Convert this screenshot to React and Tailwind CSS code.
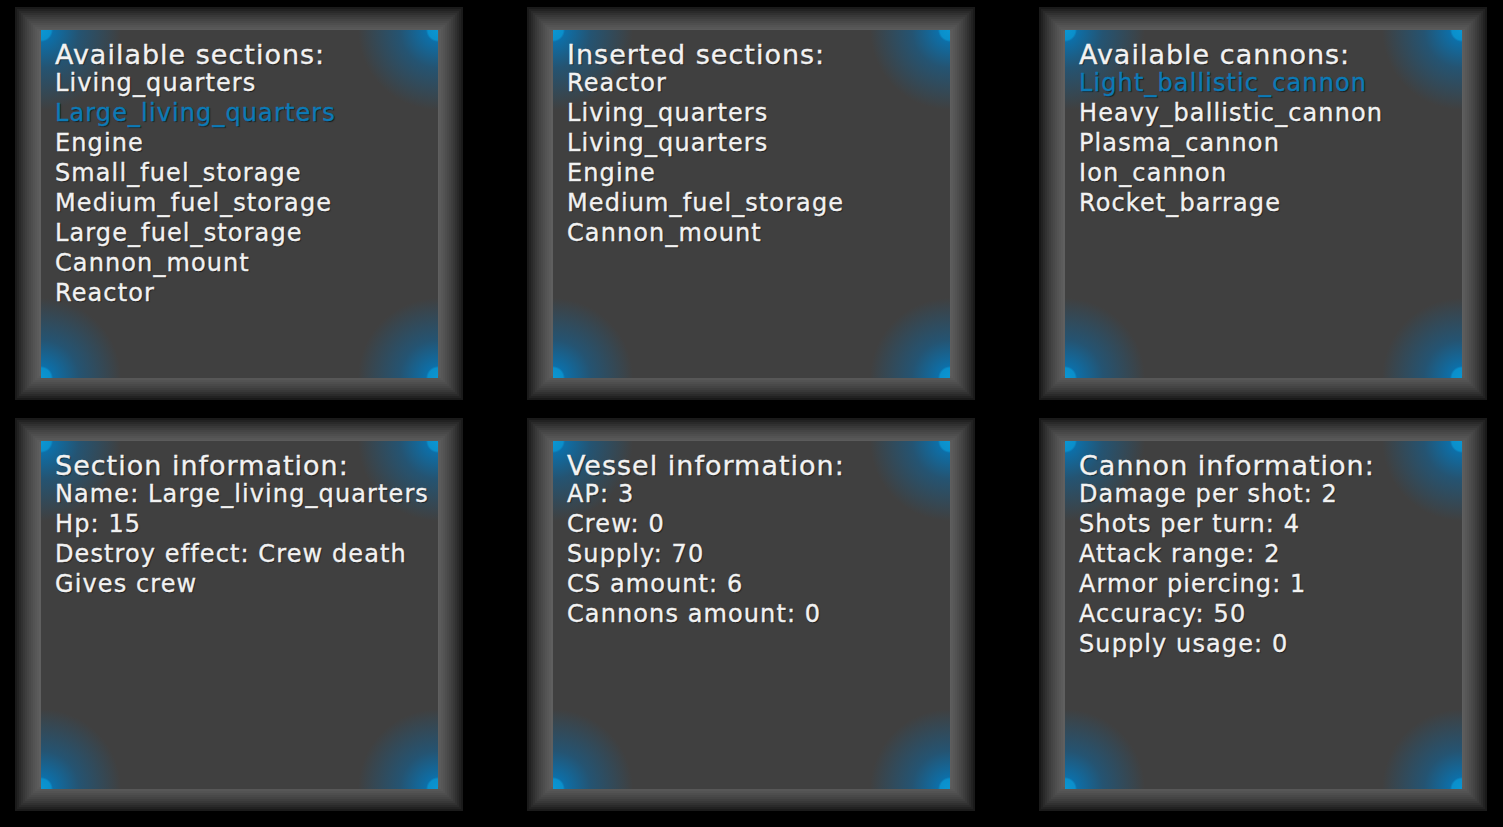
import React from "react";

const frame =
  "shadow-[inset_0_0_0_2px_#1a1a1a,inset_0_0_0_4px_#222222,inset_0_0_0_6px_#2a2a2a,inset_0_0_0_8px_#313131,inset_0_0_0_10px_#383838,inset_0_0_0_12px_#3e3e3e,inset_0_0_0_14px_#444444,inset_0_0_0_16px_#494949,inset_0_0_0_18px_#4e4e4e,inset_0_0_0_20px_#535353,inset_0_0_0_22px_#575757,inset_0_0_0_24px_#5b5b5b,inset_0_0_0_26px_#5f5f5f]";

const glow =
  "bg-[radial-gradient(circle_at_0_0,#0b96d2_0,#0a8fcb_10px,#0d6fa8_12px,rgba(14,100,155,0.55)_38px,rgba(64,64,64,0)_80px),radial-gradient(circle_at_100%_0,#0b96d2_0,#0a8fcb_10px,#0d6fa8_12px,rgba(14,100,155,0.55)_38px,rgba(64,64,64,0)_80px),radial-gradient(circle_at_0_100%,#0b96d2_0,#0a8fcb_10px,#0d6fa8_12px,rgba(14,100,155,0.55)_38px,rgba(64,64,64,0)_80px),radial-gradient(circle_at_100%_100%,#0b96d2_0,#0a8fcb_10px,#0d6fa8_12px,rgba(14,100,155,0.55)_38px,rgba(64,64,64,0)_80px)]";

function Panel({ title, items, selected }) {
  return (
    <div className={`h-[393px] w-[448px] bg-[#606060] pt-[23px] pl-[26px] pr-[25px] pb-[22px] ${frame}`}>
      <div className={`h-full w-full bg-[#404040] ${glow} pt-[12px] pl-[14px] text-[#f2f2f2] [text-shadow:1px_1px_1px_rgba(0,0,0,0.55)] [-webkit-text-stroke:0.35px_currentColor]`}>
        <div className="text-[27px] leading-[26px] tracking-[1px] whitespace-nowrap">{title}</div>
        {items.map((it, i) => (
          <div
            key={i}
            className={`text-[24px] leading-[30px] tracking-[1.1px] whitespace-nowrap ${i === selected ? "text-[#0c7ab6]" : ""}`}
          >
            {it}
          </div>
        ))}
      </div>
    </div>
  );
}

export default function App() {
  return (
    <div
      className="min-h-[827px] w-[1503px] bg-black pt-[7px] pl-[15px]"
      style={{ fontFamily: '"DejaVu Sans", Verdana, sans-serif' }}
    >
      <div className="grid grid-cols-[448px_448px_448px] gap-x-[64px] gap-y-[18px]">
        <Panel
          title="Available sections:"
          selected={1}
          items={[
            "Living_quarters",
            "Large_living_quarters",
            "Engine",
            "Small_fuel_storage",
            "Medium_fuel_storage",
            "Large_fuel_storage",
            "Cannon_mount",
            "Reactor",
          ]}
        />
        <Panel
          title="Inserted sections:"
          items={["Reactor", "Living_quarters", "Living_quarters", "Engine", "Medium_fuel_storage", "Cannon_mount"]}
        />
        <Panel
          title="Available cannons:"
          selected={0}
          items={["Light_ballistic_cannon", "Heavy_ballistic_cannon", "Plasma_cannon", "Ion_cannon", "Rocket_barrage"]}
        />
        <Panel
          title="Section information:"
          items={["Name: Large_living_quarters", "Hp: 15", "Destroy effect: Crew death", "Gives crew"]}
        />
        <Panel
          title="Vessel information:"
          items={["AP: 3", "Crew: 0", "Supply: 70", "CS amount: 6", "Cannons amount: 0"]}
        />
        <Panel
          title="Cannon information:"
          items={[
            "Damage per shot: 2",
            "Shots per turn: 4",
            "Attack range: 2",
            "Armor piercing: 1",
            "Accuracy: 50",
            "Supply usage: 0",
          ]}
        />
      </div>
    </div>
  );
}
